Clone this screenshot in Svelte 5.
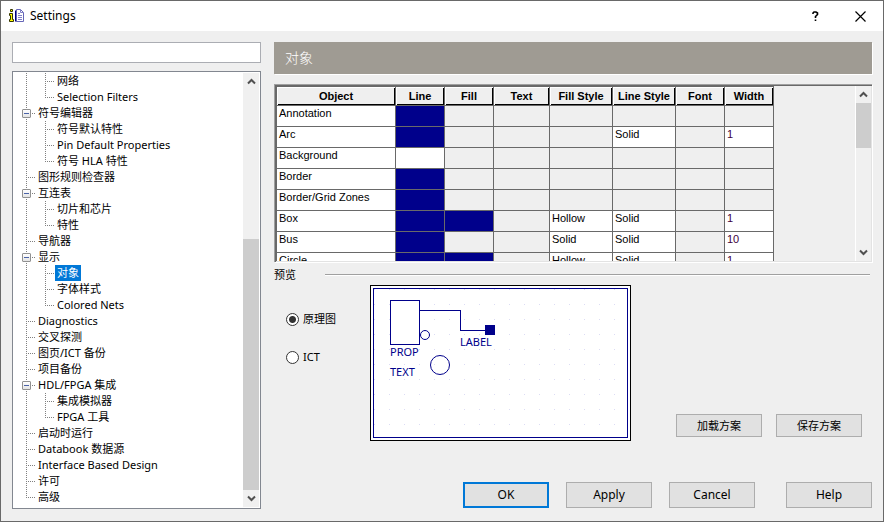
<script>
  const tree = [
    { label: '网络', depth: 1 },
    { label: 'Selection Filters', depth: 1, last: true },
    { label: '符号编辑器', depth: 0, open: true },
    { label: '符号默认特性', depth: 1 },
    { label: 'Pin Default Properties', depth: 1 },
    { label: '符号 HLA 特性', depth: 1, last: true },
    { label: '图形规则检查器', depth: 0 },
    { label: '互连表', depth: 0, open: true },
    { label: '切片和芯片', depth: 1 },
    { label: '特性', depth: 1, last: true },
    { label: '导航器', depth: 0 },
    { label: '显示', depth: 0, open: true },
    { label: '对象', depth: 1 },
    { label: '字体样式', depth: 1 },
    { label: 'Colored Nets', depth: 1, last: true },
    { label: 'Diagnostics', depth: 0 },
    { label: '交叉探测', depth: 0 },
    { label: '图页/ICT 备份', depth: 0 },
    { label: '项目备份', depth: 0 },
    { label: 'HDL/FPGA 集成', depth: 0, open: true },
    { label: '集成模拟器', depth: 1 },
    { label: 'FPGA 工具', depth: 1, last: true },
    { label: '启动时运行', depth: 0 },
    { label: 'Databook 数据源', depth: 0 },
    { label: 'Interface Based Design', depth: 0 },
    { label: '许可', depth: 0 },
    { label: '高级', depth: 0, last: true }
  ];

  const columns = [
    ['Object', 119], ['Line', 49], ['Fill', 49], ['Text', 56],
    ['Fill Style', 63], ['Line Style', 63], ['Font', 49], ['Width', 49]
  ];

  // line/fill: 'navy' or 'white' swatch, '' for not applicable
  const rows = [
    { name: 'Annotation', line: 'navy' },
    { name: 'Arc', line: 'navy', lineStyle: 'Solid', width: '1' },
    { name: 'Background', line: 'white' },
    { name: 'Border', line: 'navy' },
    { name: 'Border/Grid Zones', line: 'navy' },
    { name: 'Box', line: 'navy', fill: 'navy', fillStyle: 'Hollow', lineStyle: 'Solid', width: '1' },
    { name: 'Bus', line: 'navy', fillStyle: 'Solid', lineStyle: 'Solid', width: '10' },
    { name: 'Circle', line: 'navy', fill: 'navy', fillStyle: 'Hollow', lineStyle: 'Solid', width: '1' }
  ];

  let selected = $state('对象');
  let mode = $state('schematic');
</script>

{#snippet arrow(up)}
  <svg width="9" height="7" viewBox="0 0 9 7" aria-hidden="true">
    <path d={up ? 'M1 5.5 4.5 2 8 5.5' : 'M1 1.5 4.5 5 8 1.5'} fill="none" stroke="#505050" stroke-width="2" />
  </svg>
{/snippet}

<div class="window">
  <header class="titlebar">
    <svg class="logo" width="16" height="16" viewBox="0 0 16 16" aria-hidden="true">
      <path d="M2.5 1.5h2v2h-2zM1.5 5.5h3v6h1v2h-4v-2h1v-4h-1z" fill="#ff0" stroke="#333300" />
      <path d="M7.500 3v10M7.500 2.500h1M7.500 13.500h1" stroke="#000080" />
      <path d="M8.500 1.500h4l3 3v9h-7z" fill="#fff" stroke="#6666b8" />
      <path d="M12.500 1.500v3h3M10 5.500h2M10 7.500h4M10 9.500h4M10 11.500h4" fill="none" stroke="#8080c8" />
    </svg>
    <h1>Settings</h1>
    <button class="caption" aria-label="Help">
      <svg width="7" height="11" viewBox="0 0 7 11"><path d="M1 3V2L2 1h2l1.500 1v1.500L3.500 5.500V7M3.500 8.500V10" fill="none" stroke="#000" stroke-width="1.600" /></svg>
    </button>
    <button class="caption" aria-label="Close">
      <svg width="11" height="11" viewBox="0 0 11 11"><path d="M.5.5l10 10M10.500.5l-10 10" stroke="#000" stroke-width="1.200" /></svg>
    </button>
  </header>

  <div class="body">
    <aside>
      <input class="search" type="text" aria-label="Search" />
      <div class="tree">
        <ul>
          {#each tree as item}
            <li>
              {#if item.depth === 0}
                <span class="guide" class:half={item.last}>
                  {#if item.open}<button class="toggle" aria-label={'Collapse ' + item.label}></button>{/if}
                </span>
              {:else}
                <span class="guide through"></span>
                <span class="guide" class:half={item.last}></span>
              {/if}
              <button class="node" class:selected={selected === item.label} onclick={() => (selected = item.label)}>{item.label}</button>
            </li>
          {/each}
        </ul>
        <div class="scroll">
          <button aria-label="Scroll up">{@render arrow(true)}</button>
          <div class="before"></div>
          <div class="thumb"></div>
          <button aria-label="Scroll down">{@render arrow(false)}</button>
        </div>
      </div>
    </aside>

    <main>
      <h2>对象</h2>

      <div class="grid">
        <div class="cells">
          <table>
            <colgroup>
              {#each columns as [, w]}<col style="width: {w}px" />{/each}
            </colgroup>
            <thead>
              <tr>{#each columns as [name]}<th>{name}</th>{/each}</tr>
            </thead>
            <tbody>
              {#each rows as r}
                <tr>
                  <td class="on">{r.name}</td>
                  <td class={r.line}></td>
                  <td class={r.fill}></td>
                  <td></td>
                  <td class:on={r.fillStyle}>{r.fillStyle}</td>
                  <td class:on={r.lineStyle}>{r.lineStyle}</td>
                  <td></td>
                  <td class="num" class:on={r.width}>{r.width}</td>
                </tr>
              {/each}
            </tbody>
          </table>
        </div>
        <div class="scroll">
          <button aria-label="Scroll up">{@render arrow(true)}</button>
          <div class="thumb"></div>
          <div class="after"></div>
          <button aria-label="Scroll down">{@render arrow(false)}</button>
        </div>
      </div>

      <div class="section"><span>预览</span><hr /></div>

      <div class="preview">
        <div class="modes">
          <label><input type="radio" name="mode" value="schematic" bind:group={mode} />原理图</label>
          <label><input type="radio" name="mode" value="ict" bind:group={mode} />ICT</label>
        </div>
        <svg class="canvas" width="261" height="156" viewBox="0 0 261 156" role="img" aria-label="Preview">
          <defs>
            <pattern id="dots" width="15" height="15" x="4" y="4" patternUnits="userSpaceOnUse">
              <rect width="1" height="1" fill="#dcdcf4" />
            </pattern>
          </defs>
          <g fill="none" stroke="#00008b" shape-rendering="crispEdges">
            <rect x=".5" y=".5" width="260" height="155" fill="#fff" stroke="#000" />
            <rect x="3.500" y="3.500" width="254" height="149" fill="url(#dots)" />
            <rect x="20.500" y="15.500" width="29" height="44" fill="#fff" />
            <path d="M50 25.500h40.500v20H115" />
            <rect x="115" y="40" width="10" height="10" fill="#00008b" stroke="none" />
          </g>
          <circle cx="55" cy="50" r="4.500" fill="none" stroke="#00008b" />
          <circle cx="70" cy="80" r="9.500" fill="none" stroke="#00008b" />
          <g class="art">
            <text x="90" y="61">LABEL</text>
            <text x="20" y="71">PROP</text>
            <text x="20" y="91">TEXT</text>
          </g>
        </svg>
        <div class="schemes">
          <button class="push">加载方案</button>
          <button class="push">保存方案</button>
        </div>
      </div>

      <footer>
        <button class="push primary">OK</button>
        <button class="push">Apply</button>
        <button class="push">Cancel</button>
        <button class="push help">Help</button>
      </footer>
    </main>
  </div>
</div>

<style>
  .window, .window * { box-sizing: border-box; }
  .window {
    display: flex;
    flex-direction: column;
    min-height: 100vh;
    border: 1px solid #696969;
    background: #efefef;
    color: #000;
    font: 11px/16px "Noto Sans", "Noto Sans CJK SC", sans-serif;
  }
  button, input { font: inherit; color: inherit; margin: 0; padding: 0; border: 0; }

  .titlebar { display: flex; align-items: center; height: 30px; background: #fff; padding-left: 7px; }
  .logo { margin-right: 6px; }
  h1 { flex: 1; margin: 0; font-size: 12px; font-weight: 400; }
  .caption { display: grid; place-items: center; width: 45px; height: 29px; background: none; }

  .body { flex: 1; display: flex; gap: 13px; padding: 11px 11px 12px; }
  aside { flex: none; width: 249px; display: flex; flex-direction: column; gap: 8px; }
  .search { height: 21px; width: 100%; padding: 0 4px; border: 1px solid #abadb3; background: #fff; }

  .tree { flex: 1; display: flex; justify-content: space-between; padding: 1px 1px 1px 4px; border: 1px solid #828790; background: #fff; }
  ul { margin: 0; padding: 0; list-style: none; }
  li { display: flex; height: 16px; }
  .guide { position: relative; flex: none; width: 19px; }
  .guide::before {
    content: ""; position: absolute; left: 9px; top: 0; width: 1px; height: 16px;
    background: repeating-linear-gradient(#808080 0 1px, transparent 1px 2px);
  }
  .guide.half::before { height: 8px; }
  .guide:not(.through)::after {
    content: ""; position: absolute; left: 9px; top: 8px; width: 9px; height: 1px;
    background: repeating-linear-gradient(90deg, #808080 0 1px, transparent 1px 2px);
  }
  .toggle {
    position: absolute; z-index: 1; left: 5px; top: 4px; width: 9px; height: 9px;
    border: 1px solid #919191; border-radius: 1px;
    background: linear-gradient(#4b63a7, #4b63a7) center / 5px 1px no-repeat, linear-gradient(#fff, #e4e4e4);
  }
  .node { height: 16px; padding: 0 2px; background: none; white-space: nowrap; }
  .node.selected { background: #0078d7; color: #fff; }

  .scroll { flex: none; display: flex; flex-direction: column; width: 16px; background: #f0f0f0; }
  .scroll button { display: grid; place-items: center; height: 17px; background: none; }
  .thumb { flex: 251; background: #cdcdcd; }
  .before { flex: 149; }

  main { flex: 1; min-width: 0; display: flex; flex-direction: column; }
  h2 {
    margin: 0 0 10px; padding: 0 11px; height: 32px; background: #9f9b93; color: #fff;
    box-shadow: 1px 1px #fff; font-size: 14px; font-weight: 300; line-height: 31px;
  }

  .grid {
    display: flex; height: 178px; border: 1px solid #a0a0a0; border-right: 0; border-bottom: 0;
    box-shadow: inset 1px 1px #696969, inset -1px -1px #e3e3e3, 1px 1px #fff; padding: 1px;
  }
  .cells { flex: 1; min-width: 0; overflow: hidden; border-left: 1px solid #696969; }
  table { table-layout: fixed; width: 497px; border-collapse: separate; border-spacing: 0; font: 11px/14px "Liberation Sans", sans-serif; }
  th {
    height: 20px; padding: 0; font-weight: 700; text-align: center; white-space: nowrap;
    border: 1px solid #696969; border-left: 0;
    box-shadow: inset 1px 1px #fff, inset -1px -1px #000;
  }
  td { height: 21px; padding: 0 2px; vertical-align: top; border: solid #696969; border-width: 0 1px 1px 0; white-space: nowrap; }
  .on, .white { background: #fff; }
  .navy { background: #00008b; }
  .num { color: #400040; }
  .grid .scroll { border-left: 1px solid #fff; }
  .grid .thumb { flex: 45; }
  .after { flex: 95; }

  .section { display: flex; align-items: center; gap: 29px; margin: 5px 2px 2px 0; }
  hr { flex: 1; height: 2px; margin: 0; border: 0; border-top: 1px solid #a0a0a0; background: #fff; }

  .preview { display: flex; }
  .modes { flex: none; width: 96px; padding: 26px 0 0 12px; display: flex; flex-direction: column; gap: 22px; }
  .modes label { display: flex; align-items: center; gap: 4px; height: 16px; }
  .modes input { appearance: none; width: 13px; height: 13px; border: 1px solid #333; border-radius: 50%; background: #fff; }
  .modes input:checked { background: radial-gradient(circle, #333 3px, #fff 4px); }
  .canvas { flex: none; display: block; }
  .art { font-size: 11px; fill: #00008b; }
  .schemes { display: flex; align-items: flex-end; gap: 14px; margin-left: auto; padding: 0 10px 4px 0; }
  .push { width: 86px; height: 26px; background: #e1e1e1; border: 1px solid #adadad; }
  .schemes .push { height: 23px; }
  .primary { border: 2px solid #0078d7; }
  footer { display: flex; justify-content: flex-end; gap: 17px; margin-top: auto; padding-bottom: 1px; font-size: 12px; }
  .help { margin-left: 14px; }
</style>
